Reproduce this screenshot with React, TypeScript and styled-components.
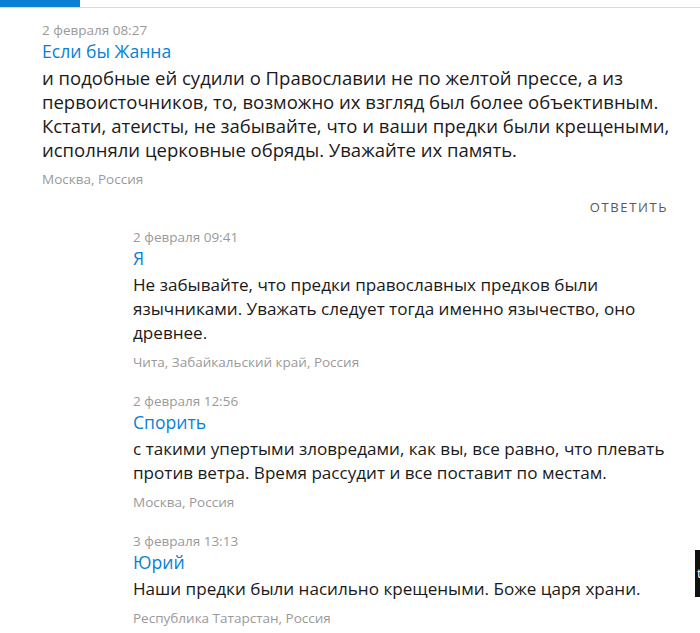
import React from "react";
import styled, { createGlobalStyle } from "styled-components";

const Global = createGlobalStyle`
  html, body { margin: 0; padding: 0; background: #fff; overflow: hidden; }
  body { font-family: "Open Sans", "Noto Sans", sans-serif; color: #1a1a1a; }
`;

const Page = styled.div`
  width: 700px;
  min-height: 633px;
  position: relative;
`;

const TopBar = styled.div`
  height: 7px;
  border-bottom: 1px solid #d9d9d9;
  display: flex;
`;

const TopBarActive = styled.div`
  width: 80px;
  background: #0b7fd3;
`;

const Thread = styled.div`
  padding: 12px 26px 0 42px;
  display: flex;
  flex-direction: column;
`;

const Comment = styled.div<{ $nested?: boolean }>`
  display: flex;
  flex-direction: column;
  margin-left: ${(p) => (p.$nested ? "91px" : "0")};
  margin-bottom: ${(p) => (p.$nested ? "19px" : "0")};
`;

const DateLine = styled.div`
  font-size: 13.5px;
  line-height: 20px;
  color: #9a9a9a;
`;

const Author = styled.a`
  font-size: 17.6px;
  line-height: 22px;
  color: #0b7fd3;
  text-decoration: none;
  margin-bottom: 4px;
`;

const Body = styled.p<{ $nested?: boolean }>`
  margin: 0;
  font-size: ${(p) => (p.$nested ? "17.1px" : "18.5px")};
  line-height: 24px;
  color: #1a1a1a;
`;

const Location = styled.div`
  font-size: 13.5px;
  line-height: 20px;
  color: #9a9a9a;
  margin-top: 7px;
`;

const ReplyRow = styled.div`
  display: flex;
  justify-content: flex-end;
  margin-top: 8px;
  margin-bottom: 10px;
`;

const ReplyButton = styled.button`
  border: none;
  background: none;
  padding: 0 6px 0 0;
  font-family: inherit;
  font-size: 13px;
  line-height: 20px;
  letter-spacing: 1.6px;
  color: #55595f;
  text-transform: uppercase;
  cursor: pointer;
`;

const SideTab = styled.div`
  position: absolute;
  left: 695px;
  top: 550px;
  width: 40px;
  height: 47px;
  background: #111;
  color: #fff;
  font-size: 13px;
  line-height: 47px;
  padding-left: 2px;
  box-sizing: border-box;
  white-space: nowrap;
`;

type Item = { date: string; author: string; text: string; place: string };

const replies: Item[] = [
  {
    date: "2 февраля 09:41",
    author: "Я",
    text: "Не забывайте, что предки православных предков были язычниками. Уважать следует тогда именно язычество, оно древнее.",
    place: "Чита, Забайкальский край, Россия",
  },
  {
    date: "2 февраля 12:56",
    author: "Спорить",
    text: "с такими упертыми зловредами, как вы, все равно, что плевать против ветра. Время рассудит и все поставит по местам.",
    place: "Москва, Россия",
  },
  {
    date: "3 февраля 13:13",
    author: "Юрий",
    text: "Наши предки были насильно крещеными. Боже царя храни.",
    place: "Республика Татарстан, Россия",
  },
];

export default function App() {
  return (
    <Page>
      <Global />
      <TopBar>
        <TopBarActive />
      </TopBar>
      <Thread>
        <Comment>
          <DateLine>2 февраля 08:27</DateLine>
          <Author>Если бы Жанна</Author>
          <Body>
            и подобные ей судили о Православии не по желтой прессе, а из первоисточников, то, возможно их взгляд был более объективным. Кстати, атеисты, не забывайте, что и ваши предки были крещеными, исполняли церковные обряды. Уважайте их память.
          </Body>
          <Location>Москва, Россия</Location>
        </Comment>
        <ReplyRow>
          <ReplyButton>Ответить</ReplyButton>
        </ReplyRow>
        {replies.map((r) => (
          <Comment $nested key={r.date}>
            <DateLine>{r.date}</DateLine>
            <Author>{r.author}</Author>
            <Body $nested>{r.text}</Body>
            <Location>{r.place}</Location>
          </Comment>
        ))}
      </Thread>
      <SideTab>top</SideTab>
    </Page>
  );
}
